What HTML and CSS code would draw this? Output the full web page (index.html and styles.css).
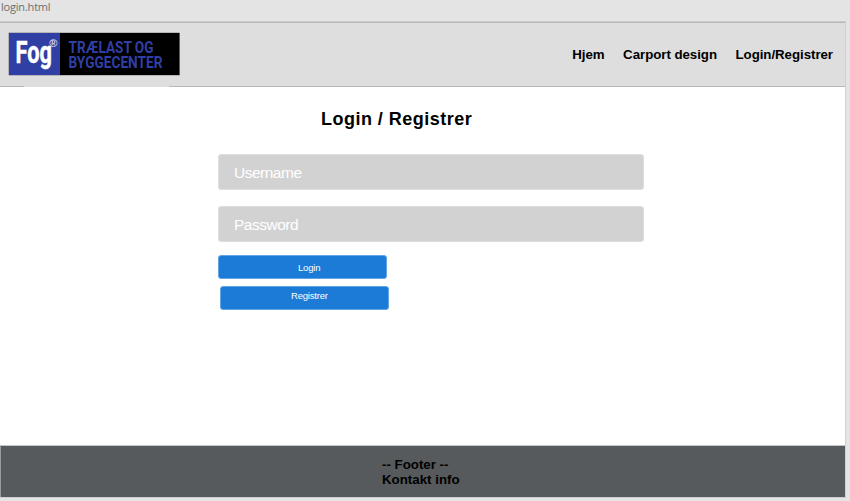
FILE: index.html
```
<!DOCTYPE html>
<html lang="da">
<head>
<meta charset="utf-8">
<title>login.html</title>
<link rel="stylesheet" href="styles.css">
</head>
<body>
<div class="tab">login.html</div>
<div class="page">
  <header class="header">
    <svg class="logo" width="172" height="44" viewBox="0 0 172 44" role="img" aria-label="Fog">
      <rect x="0.5" y="0.5" width="171" height="43" fill="#8b8b95"/>
      <rect x="1" y="1" width="51" height="42" fill="#303fa3"/>
      <rect x="52" y="1" width="119.5" height="42" fill="#000"/>
      <text class="brand" x="7.5" y="30.5" textLength="36.5" lengthAdjust="spacingAndGlyphs">Fog</text>
      <text class="mark" x="41.3" y="15">®</text>
      <text class="tagline" x="60.5" y="20.8" textLength="85" lengthAdjust="spacingAndGlyphs">TRÆLAST OG</text>
      <text class="tagline" x="60.5" y="35.8" textLength="94" lengthAdjust="spacingAndGlyphs">BYGGECENTER</text>
    </svg>
    <nav class="nav">
      <a class="home">Hjem</a>
      <a class="design">Carport design</a>
      <a class="account">Login/Registrer</a>
    </nav>
  </header>
  <div class="seam"></div>
  <main class="main">
    <h1 class="title">Login / Registrer</h1>
    <form class="form">
      <div class="field">Username</div>
      <div class="field">Password</div>
      <div class="button login">Login</div>
      <div class="button register">Registrer</div>
    </form>
  </main>
  <footer class="footer">
    <div>-- Footer --</div>
    <div class="contact">Kontakt info</div>
  </footer>
</div>
</body>
</html>
```
FILE: styles.css
```
* { box-sizing: border-box; }
body {
  margin: 0;
  height: 501px;
  overflow: hidden;
  background: #e4e4e4;
  font-family: "Liberation Sans", Arial, sans-serif;
  color: #000;
}
.tab {
  height: 21px;
  padding-left: 1px;
  font: 11px/14px "Open Sans", sans-serif;
  letter-spacing: -0.2px;
  color: #6e6e6e;
}
.page {
  width: 846px;
  height: 477px;
  display: flex;
  flex-direction: column;
  background: #fff;
  border-top: 1px solid #cbcbcb;
  border-right: 1px solid #d2d2d2;
  border-bottom: 1px solid #cfcfcf;
}
.header {
  height: 64px;
  display: flex;
  justify-content: space-between;
  padding: 9px 12px 0 8px;
  width: 845px;
  background: #dedede;
  border-top: 1px solid #b8b8b8;
}
/* The header's lower rule is lighter under the logo. */
.seam {
  width: 845px;
  height: 1px;
  background: linear-gradient(90deg, #b8b8b8 24px, #dedede 24px 169px, #b8b8b8 169px);
}
.logo { display: block; }
.brand { font: bold 32px "Roboto", sans-serif; fill: #fff; stroke: #fff; stroke-width: 0.5px; }
.mark { font: bold 11px "Liberation Sans", sans-serif; fill: #d8daf0; }
.tagline { font: bold 16px "Roboto", sans-serif; fill: #303fa3; }
.nav {
  display: flex;
  gap: 18.5px;
  padding-top: 14px;
  font-size: 13.3px;
  line-height: 17px;
  font-weight: bold;
  letter-spacing: -0.05px;
  white-space: nowrap;
}
.main { flex: 1; }
.title {
  margin: 22px 0 0 321px;
  font-size: 18px;
  line-height: 20px;
  letter-spacing: 0.48px;
}
.form { width: 425px; margin: 25px 0 0 218px; }
.field {
  width: 426px;
  height: 36px;
  margin-bottom: 16px;
  padding-left: 15px;
  border: 1px solid #dedede;
  border-radius: 3px;
  background: #d2d2d2;
  color: #fff;
  font-size: 15.5px;
  line-height: 36px;
  letter-spacing: -0.5px;
}
.button {
  width: 169px;
  height: 24px;
  border: 1px solid #62a5e4;
  border-radius: 3px;
  background: #1c7bd7;
  color: #fff;
  font-size: 9.5px;
  line-height: 24px;
  letter-spacing: -0.2px;
}
.login { margin-top: -3px; padding-left: 79px; }
.register { margin: 7px 0 0 2px; padding-left: 70px; line-height: 18px; }
.footer {
  width: 845px;
  height: 52px;
  padding: 11px 0 0 381px;
  background: #565a5c;
  border-top: 1px solid #c5c7c8;
  border-left: 1px solid #999c9d;
  font-size: 13.3px;
  line-height: 15px;
  font-weight: bold;
  letter-spacing: 0;
}
```
